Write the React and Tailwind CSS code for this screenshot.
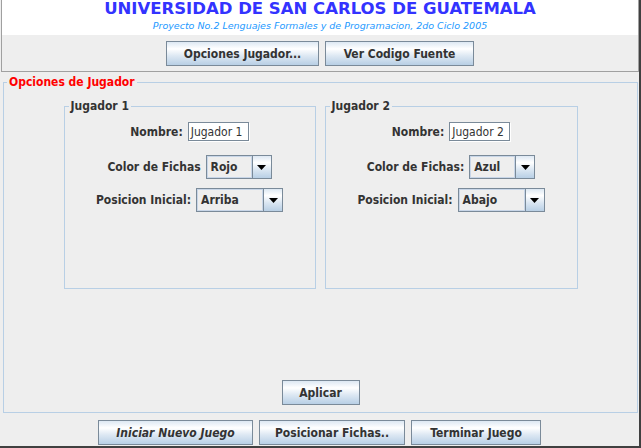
import React from "react";

const FONT = { fontFamily: '"DejaVu Sans Condensed", "DejaVu Sans", sans-serif' };
const GRAD =
  "bg-[linear-gradient(to_bottom,#dde8f3_0%,#ffffff_30%,#dde8f3_60%,#b8cfe5_100%)]";

function Btn({ children, w, italic }) {
  return (
    <div
      className={`h-[25px] border border-[#7a8a99] ${GRAD} text-[#333333] font-bold text-[12px] flex items-center justify-center ${
        italic ? "italic" : ""
      }`}
      style={{ width: w }}
    >
      {children}
    </div>
  );
}

function Combo({ value, w }) {
  return (
    <div
      className="flex h-[24px] border border-[#7a8a99] bg-[#eeeeee]"
      style={{ width: w }}
    >
      <div className="flex-1 border border-[#c8d6e8] flex items-center pl-[3px] font-bold text-[12px] text-[#333333]">
        {value}
      </div>
      <div
        className={`w-[19px] border-l border-[#7a8a99] ${GRAD} flex items-center justify-center`}
      >
        <svg width="9" height="5" viewBox="0 0 9 5">
          <polygon points="0,0 9,0 4.5,5" fill="#000" />
        </svg>
      </div>
    </div>
  );
}

function TextField({ value }) {
  return (
    <div className="w-[61px] h-[19px] border border-[#7a8a99] bg-white shadow-[1px_1px_0_#ffffff] flex items-center pl-[2px] text-[12px] text-[#333333] font-normal">
      {value}
    </div>
  );
}

function Row({ label, children, className }) {
  return (
    <div className={`flex items-center gap-[5px] ${className || ""}`}>
      <span className="font-bold text-[12px] text-[#333333]">{label}</span>
      {children}
    </div>
  );
}

function PlayerBox({ title, colorLabel, color, pos, name, w }) {
  return (
    <div
      className="relative h-[183px] border border-[#b8cfe5] flex flex-col items-center"
      style={{ width: w }}
    >
      <span className="absolute left-[4px] top-[-9px] px-[2px] bg-[#eeeeee] font-bold text-[12px] text-[#333333] leading-[16px]">
        {title}
      </span>
      <Row label="Nombre:" className="mt-[15px]">
        <TextField value={name} />
      </Row>
      <Row label={colorLabel} className="mt-[14px]">
        <Combo value={color} w={66} />
      </Row>
      <Row label="Posicion Inicial:" className="mt-[9px]">
        <Combo value={pos} w={87} />
      </Row>
    </div>
  );
}

export default function App() {
  return (
    <div
      className="w-[641px] h-[448px] bg-[#eeeeee] border-r-2 border-b-2 border-[#404040] flex flex-col overflow-hidden"
      style={FONT}
    >
      {/* top panel */}
      <div className="ml-[1px] w-[638px] h-[72px] border-x border-b border-[#a0a0a0] flex flex-col">
        <div className="h-[35px] bg-white flex flex-col items-center">
          <div
            className="text-[16.5px] leading-[18px] font-bold text-[#3333ff]"
            style={{ fontFamily: '"DejaVu Sans", sans-serif' }}
          >
            UNIVERSIDAD DE SAN CARLOS DE GUATEMALA
          </div>
          <div
            className="mt-[2px] text-[9.5px] leading-[12px] italic text-[#2299ff]"
            style={{ fontFamily: '"DejaVu Sans", sans-serif' }}
          >
            Proyecto No.2 Lenguajes Formales y de Programacion, 2do Ciclo 2005
          </div>
        </div>
        <div className="flex-1 flex items-center justify-center gap-[6px] pt-[1px]">
          <Btn w={153}>Opciones Jugador...</Btn>
          <Btn w={149}>Ver Codigo Fuente</Btn>
        </div>
      </div>

      {/* options panel */}
      <div className="relative ml-[3px] mt-[10px] w-[635px] h-[331px] border border-[#b8cfe5] flex flex-col items-center">
        <span className="absolute left-[3px] top-[-9px] px-[2px] bg-[#eeeeee] font-bold text-[12px] text-[#ff0000] leading-[16px]">
          Opciones de Jugador
        </span>
        <div className="mt-[23px] flex gap-[9px]">
          <PlayerBox
            title="Jugador 1"
            colorLabel="Color de Fichas"
            color="Rojo"
            pos="Arriba"
            name="Jugador 1"
            w={252}
          />
          <PlayerBox
            title="Jugador 2"
            colorLabel="Color de Fichas:"
            color="Azul"
            pos="Abajo"
            name="Jugador 2"
            w={253}
          />
        </div>
        <div className="mt-auto mb-[7px]">
          <Btn w={78}>Aplicar</Btn>
        </div>
      </div>

      {/* bottom buttons */}
      <div className="mt-[7px] flex justify-center gap-[6px]">
        <Btn w={155} italic>
          Iniciar Nuevo Juego
        </Btn>
        <Btn w={146}>Posicionar Fichas..</Btn>
        <Btn w={130}>Terminar Juego</Btn>
      </div>
    </div>
  );
}
